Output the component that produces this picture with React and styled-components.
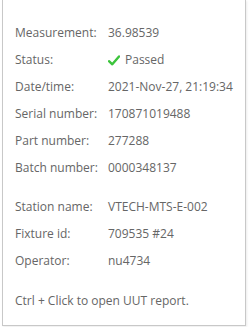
import React from 'react'
import styled, { createGlobalStyle } from 'styled-components'

const Global = createGlobalStyle`
  html, body {
    margin : 0;
    padding : 0;
    background : #ffffff;
    overflow : hidden;
  }
`;

const Page = styled.div`
  width : 251px;
  height : 327px;
  padding-left : 2px;
  box-sizing : border-box;
`;

const Tooltip = styled.div`
  width : 244px;
  height : 326px;
  box-sizing : border-box;
  background : #ffffff;
  border : 1px solid #c8c8c8;
  border-top : none;
  padding : 24px 0 0 12px;
  font-family : "Open Sans", "Noto Sans", sans-serif;
  font-size : 12px;
  color : #666666;
  box-shadow : 1px 1px 2px rgba(0,0,0,0.08);
`;

const Group = styled.div`
  display : flex;
  flex-direction : column;
  gap : 9px;
  margin-bottom : ${p => p.gap || 0}px;
`;

const Row = styled.div`
  display : grid;
  grid-template-columns : 93px 1fr;
  line-height : 18px;
  white-space : nowrap;
`;

const Value = styled.span`
  display : flex;
  align-items : center;
  gap : 5px;
`;

const Hint = styled.div`
  line-height : 18px;
`;

const Check = () => (
  <svg width="12" height="11" viewBox="0 0 12 11">
    <path d="M1 6.2 L4.3 9.3 L11 1.5" fill="none" stroke="#3cc43c" strokeWidth="2.4" strokeLinecap="round" strokeLinejoin="round" />
  </svg>
)

const App = () => {
  return (
    <Page>
      <Global />
      <Tooltip>
        <Group gap={21}>
          <Row><span>Measurement:</span><Value>36.98539</Value></Row>
          <Row><span>Status:</span><Value><Check />Passed</Value></Row>
          <Row><span>Date/time:</span><Value>2021-Nov-27, 21:19:34</Value></Row>
          <Row><span>Serial number:</span><Value>170871019488</Value></Row>
          <Row><span>Part number:</span><Value>277288</Value></Row>
          <Row><span>Batch number:</span><Value>0000348137</Value></Row>
        </Group>
        <Group gap={22}>
          <Row><span>Station name:</span><Value>VTECH-MTS-E-002</Value></Row>
          <Row><span>Fixture id:</span><Value>709535 #24</Value></Row>
          <Row><span>Operator:</span><Value>nu4734</Value></Row>
        </Group>
        <Hint>Ctrl + Click to open UUT report.</Hint>
      </Tooltip>
    </Page>
  )
}

export default App
